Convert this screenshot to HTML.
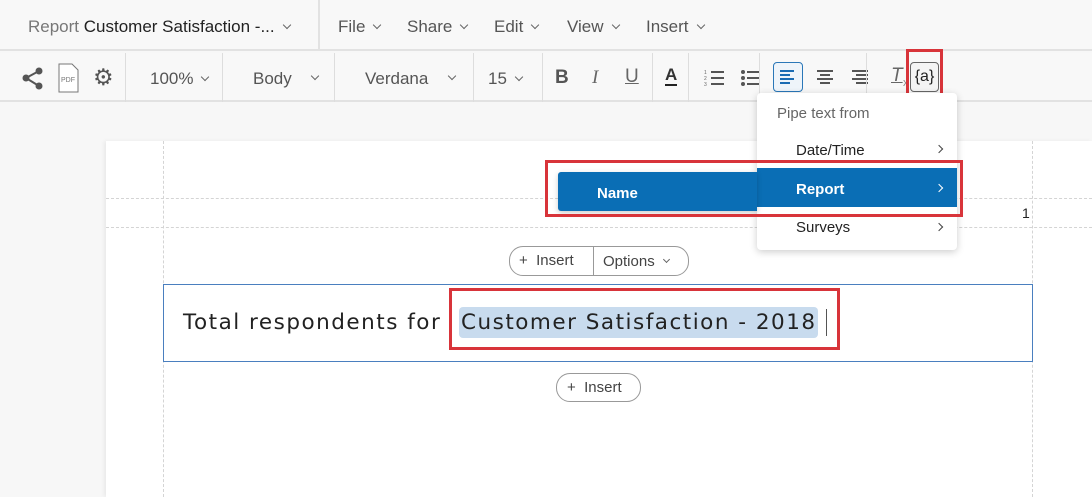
<!DOCTYPE html>
<html><head><style>
*{margin:0;padding:0;box-sizing:border-box}
body{width:1092px;height:497px;overflow:hidden;background:#f7f7f7;font-family:"Liberation Sans",Arial,sans-serif;position:relative;color:#333}
.a{position:absolute}
.t{font-size:16px;color:#555;white-space:nowrap}
.chev{display:inline-block;width:6px;height:6px;border-right:1.3px solid #666;border-bottom:1.3px solid #666;transform:rotate(45deg);margin-left:9px;position:relative;top:-4px}
.ch2{position:absolute;width:6px;height:6px;border-right:1.3px solid #666;border-bottom:1.3px solid #666;transform:rotate(45deg)}
.vs{position:absolute;width:1px;background:#ddd}
.dv{position:absolute;border-left:1px dashed #d4d4d4;width:0}
.dh{position:absolute;border-top:1px dashed #d4d4d4;height:0}
.red{position:absolute;border:3px solid #d8343a}
.pill{position:absolute;border:1px solid #999;border-radius:14px;background:#fff;font-size:15px;color:#444;white-space:nowrap}
.mi{position:absolute;font-size:15px;color:#222}
.arr{position:absolute;width:6px;height:6px;border-right:1.3px solid #444;border-top:1.3px solid #444;transform:rotate(45deg)}
.big{font-family:'DejaVu Sans',Verdana,sans-serif;font-size:21.5px;color:#222;white-space:nowrap;letter-spacing:1.5px}
</style></head><body>
<!-- top bar -->
<div class="a" style="left:0;top:0;width:1092px;height:51px;background:#f8f8f8;border-bottom:2px solid #e2e2e2"></div>
<div class="a t" style="left:28px;top:17px;font-size:17px"><span style="color:#777">Report</span> <span style="color:#222">Customer Satisfaction -...</span><span class="chev"></span></div>
<div class="vs" style="left:318px;top:0;height:51px;background:#e2e2e2;width:2px"></div>
<div class="a t" style="left:338px;top:17px;font-size:17px">File<span class="chev"></span></div>
<div class="a t" style="left:407px;top:17px;font-size:17px">Share<span class="chev"></span></div>
<div class="a t" style="left:494px;top:17px;font-size:17px">Edit<span class="chev"></span></div>
<div class="a t" style="left:567px;top:17px;font-size:17px">View<span class="chev"></span></div>
<div class="a t" style="left:646px;top:17px;font-size:17px">Insert<span class="chev"></span></div>
<!-- toolbar -->
<div class="a" style="left:0;top:53px;width:1092px;height:49px;background:#f8f8f8;border-bottom:2px solid #e2e2e2"></div>
<svg class="a" style="left:21px;top:66px" width="26" height="26"><circle cx="18" cy="5" r="3.5" fill="#555"/><circle cx="5" cy="12" r="3.5" fill="#555"/><circle cx="18" cy="20" r="3.5" fill="#555"/><path d="M5 12L18 5M5 12L18 20" stroke="#555" stroke-width="2"/></svg>
<svg class="a" style="left:58px;top:63px" width="22" height="30"><path d="M1 1H14L20 7V29H1Z" fill="#fff" stroke="#777"/><text x="3" y="19" font-size="7" fill="#777" font-family="Liberation Sans">PDF</text></svg>
<div class="a" style="left:93px;top:64px;font-size:23px;color:#555">⚙</div>
<div class="vs" style="left:125px;top:53px;height:49px"></div>
<div class="a t" style="left:150px;top:69px;font-size:17px">100%<span class="chev"></span></div>
<div class="vs" style="left:222px;top:53px;height:49px"></div>
<div class="a t" style="left:253px;top:69px;font-size:17px">Body</div><div class="ch2" style="left:312px;top:73px"></div>
<div class="vs" style="left:334px;top:53px;height:49px"></div>
<div class="a t" style="left:365px;top:69px;font-size:17px">Verdana</div><div class="ch2" style="left:449px;top:73px"></div>
<div class="vs" style="left:473px;top:53px;height:49px"></div>
<div class="a t" style="left:488px;top:69px;font-size:17px">15<span class="chev"></span></div>
<div class="vs" style="left:542px;top:53px;height:49px"></div>
<div class="a" style="left:555px;top:67px;font-size:19px;font-weight:bold;color:#555">B</div>
<div class="a" style="left:592px;top:67px;font-size:19px;font-style:italic;font-family:'Liberation Serif',serif;color:#666">I</div>
<div class="a" style="left:625px;top:66px;font-size:19px;color:#666;text-decoration:underline">U</div>
<div class="vs" style="left:652px;top:53px;height:49px"></div>
<div class="a" style="left:665px;top:65px;font-size:17px;font-weight:bold;color:#333;border-bottom:2.5px solid #222;line-height:19px">A</div>
<div class="vs" style="left:688px;top:53px;height:49px"></div>
<svg class="a" style="left:704px;top:68px" width="22" height="20"><text x="0" y="6" font-size="5" fill="#666">1</text><text x="0" y="12" font-size="5" fill="#666">2</text><text x="0" y="18" font-size="5" fill="#666">3</text><path d="M7 4H20M7 10H20M7 16H20" stroke="#555" stroke-width="2"/></svg>
<svg class="a" style="left:740px;top:68px" width="22" height="20"><circle cx="3" cy="4" r="2" fill="#555"/><circle cx="3" cy="10" r="2" fill="#555"/><circle cx="3" cy="16" r="2" fill="#555"/><path d="M7 4H20M7 10H20M7 16H20" stroke="#555" stroke-width="2"/></svg>
<div class="vs" style="left:759px;top:53px;height:49px"></div>
<div class="a" style="left:773px;top:62px;width:30px;height:30px;border:1.5px solid #2a77b8;border-radius:4px;background:#eef4fa"></div>
<svg class="a" style="left:780px;top:69px" width="18" height="16"><path d="M0 2H14M0 6H10M0 10H14M0 14H10" stroke="#1a6bb3" stroke-width="2"/></svg>
<svg class="a" style="left:816px;top:69px" width="18" height="16"><path d="M1 2H17M4 6H14M1 10H17M4 14H14" stroke="#555" stroke-width="2"/></svg>
<svg class="a" style="left:851px;top:69px" width="18" height="16"><path d="M1 2H17M5 6H17M1 10H17M5 14H17" stroke="#555" stroke-width="2"/></svg>
<div class="vs" style="left:866px;top:53px;height:49px"></div>
<div class="a" style="left:891px;top:65px;font-size:19px;font-style:italic;color:#666;text-decoration:underline">T</div>
<div class="a" style="left:903px;top:77px;font-size:11px;color:#888">x</div>
<div class="a" style="left:910px;top:62px;width:29px;height:30px;border:1.5px solid #666;border-radius:4px;background:#f4f4f4;font-size:16px;text-align:center;line-height:27px;color:#222">{a}</div>
<div class="red" style="left:906px;top:49px;width:37px;height:54px"></div>
<!-- page -->
<div class="a" style="left:106px;top:141px;width:986px;height:356px;background:#fff;box-shadow:-2px 0 4px rgba(0,0,0,.06)"></div>
<div class="dv" style="left:163px;top:141px;height:356px"></div>
<div class="dv" style="left:1032px;top:141px;height:356px"></div>
<div class="dh" style="left:106px;top:198px;width:986px"></div>
<div class="dh" style="left:106px;top:227px;width:986px"></div>
<div class="a" style="left:1022px;top:205px;font-size:14px;color:#222">1</div>
<div class="pill" style="left:509px;top:246px;width:180px;height:30px"></div>
<div class="a" style="left:519px;top:252px;font-size:15px;color:#444">+&nbsp; Insert</div>
<div class="vs" style="left:593px;top:246px;height:30px;background:#999"></div>
<div class="a" style="left:603px;top:253px;font-size:15px;color:#444">Options<span class="chev" style="width:5px;height:5px"></span></div>
<div class="a" style="left:163px;top:284px;width:870px;height:78px;border:1.5px solid #4a7fbf"></div>
<div class="a big" style="left:183px;top:310px">Total respondents for</div>
<div class="a" style="left:459px;top:307px;width:359px;height:31px;background:#c8dbee;border-radius:4px"></div>
<div class="a big" style="left:461px;top:310px">Customer Satisfaction - 2018</div>
<div class="vs" style="left:826px;top:309px;height:27px;background:#555"></div>
<div class="red" style="left:449px;top:288px;width:391px;height:62px"></div>
<div class="pill" style="left:556px;top:373px;width:85px;height:29px"></div>
<div class="a" style="left:567px;top:379px;font-size:15px;color:#444">+&nbsp; Insert</div>
<!-- menus -->
<div class="a" style="left:757px;top:93px;width:200px;height:157px;background:#fff;border-radius:4px;box-shadow:0 2px 8px rgba(0,0,0,.2)"></div>
<div class="a" style="left:777px;top:105px;font-size:15px;color:#666">Pipe text from</div>
<div class="mi" style="left:796px;top:142px">Date/Time</div><div class="arr" style="left:936px;top:146px"></div>
<div class="a" style="left:757px;top:168px;width:200px;height:39px;background:#0a6eb5"></div>
<div class="mi" style="left:796px;top:181px;color:#fff;font-weight:bold">Report</div><div class="arr" style="left:936px;top:185px;border-color:#fff"></div>
<div class="mi" style="left:796px;top:219px">Surveys</div><div class="arr" style="left:936px;top:224px"></div>
<div class="a" style="left:558px;top:172px;width:199px;height:39px;background:#0a6eb5;border-radius:3px 0 0 3px;box-shadow:0 2px 6px rgba(0,0,0,.2)"></div>
<div class="mi" style="left:597px;top:185px;color:#fff;font-weight:bold">Name</div>
<div class="red" style="left:545px;top:160px;width:418px;height:57px"></div>
</body></html>
